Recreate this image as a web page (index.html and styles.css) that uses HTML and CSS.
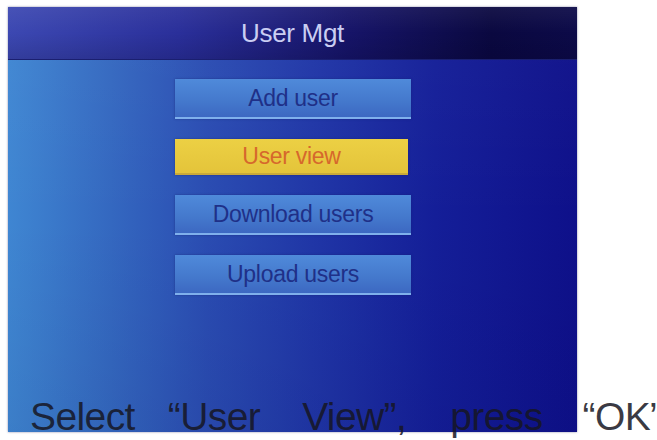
FILE: index.html
```html
<!DOCTYPE html>
<html>
<head>
<meta charset="utf-8">
<link rel="stylesheet" href="styles.css">
</head>
<body>
<div class="page">
  <div class="screen">
    <div class="header">User Mgt</div>
    <div class="menu">
      <div class="item">Add user</div>
      <div class="item selected">User view</div>
      <div class="item">Download users</div>
      <div class="item">Upload users</div>
    </div>
  </div>
  <p class="caption"><span class="w1">Select</span><span class="w2">“User</span><span class="w3">View”,</span><span class="w4">press</span><span class="w5">“OK”</span></p>
</div>
</body>
</html>
```
FILE: styles.css
```css
html, body {
  margin: 0;
  padding: 0;
  background: #ffffff;
  overflow: hidden;
  width: 657px;
  height: 440px;
}
.page {
  width: 657px;
  height: 440px;
  overflow: hidden;
}
.screen {
  margin: 7px 0 0 8px;
  width: 569px;
  height: 425px;
  background:
    linear-gradient(180deg, rgba(255,255,255,0.03) 0%, rgba(0,0,0,0) 50%, rgba(0,0,40,0.06) 100%),
    linear-gradient(90deg, #3f86d2 0%, #3468c0 18%, #2a4cb2 35%, #1f34a6 55%, #141e98 75%, #0e108a 100%);
  box-shadow: 0 0 2px rgba(60,60,110,0.6);
  display: flex;
  flex-direction: column;
  font-family: "Liberation Sans", Arial, sans-serif;
}
.header {
  height: 52px;
  flex: none;
  background:
    linear-gradient(180deg, rgba(255,255,255,0.06) 0%, rgba(0,0,0,0) 50%, rgba(0,0,30,0.15) 100%),
    linear-gradient(90deg, #3c48b2 0%, #2a2f9a 30%, #161468 60%, #0a0840 85%, #0c0a48 100%);
  border-bottom: 1px solid #1a1f70;
  color: #c9cdf2;
  font-size: 26px;
  line-height: 52px;
  text-align: center;
  letter-spacing: -0.3px;
}
.menu {
  display: flex;
  flex-direction: column;
  align-items: flex-start;
  gap: 20px;
  padding: 19px 0 0 167px;
}
.item {
  width: 236px;
  height: 40px;
  box-sizing: border-box;
  background: linear-gradient(180deg, #4f8ada 0%, #4478cc 60%, #3c68c2 100%);
  border-bottom: 2px solid #7fb0ec;
  box-shadow: 0 0 2px rgba(20,30,100,0.5);
  color: #1f3088;
  font-size: 23px;
  line-height: 38px;
  text-align: center;
  letter-spacing: -0.3px;
}
.item.selected {
  width: 233px;
  height: 36px;
  background: linear-gradient(180deg, #ecd044 0%, #e4c43a 100%);
  border-bottom: 2px solid #c9a93a;
  color: #d6682c;
  line-height: 34px;
}
.caption {
  margin: -37px 0 0 0;
  position: relative;
  white-space: nowrap;
  font-family: "Liberation Sans", Arial, sans-serif;
  font-size: 39px;
  line-height: 44px;
  color: rgba(22,22,34,0.86);
  letter-spacing: -0.6px;
}
.w1 { margin-left: 30px; }
.w2 { margin-left: 33px; }
.w3 { margin-left: 42px; }
.w4 { margin-left: 44px; }
.w5 { margin-left: 40px; }
```
